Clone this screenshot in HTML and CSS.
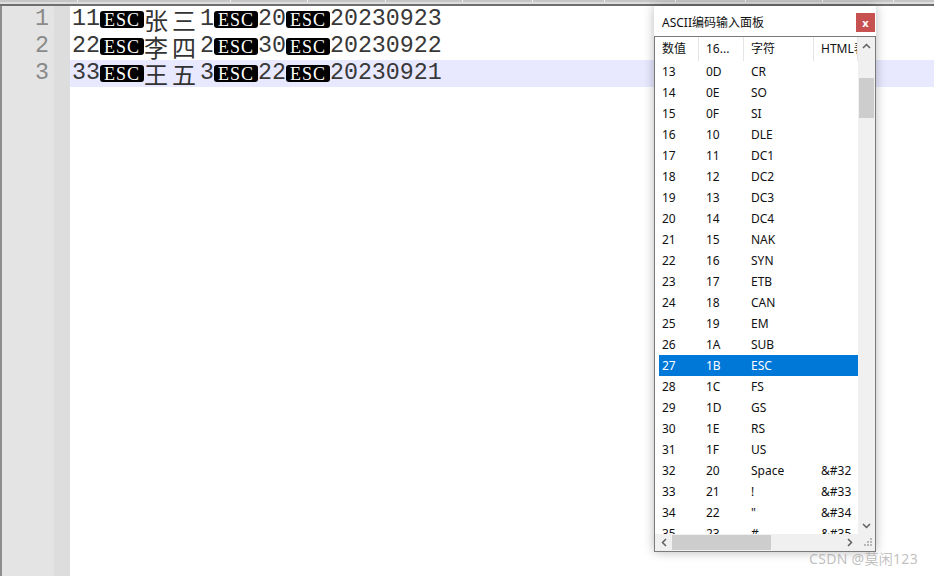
FILE: index.html
```html
<!DOCTYPE html>
<html lang="zh-CN">
  <head>
    <meta charset="UTF-8" />
    <meta name="viewport" content="width=device-width, initial-scale=1.0" />
    <title>ASCII 编码输入面板</title>
    <link rel="stylesheet" href="styles.css">
  </head>
  <body>
    <div class="tabs">
      <div class="tab" style="width: 77px"></div>
      <div class="tab" style="width: 152px"></div>
      <div class="tab" style="width: 76px"></div>
      <div class="tab" style="width: 77px"></div>
      <div class="tab" style="width: 76px"></div>
      <div class="tab" style="width: 69px"></div>
      <div class="tab" style="width: 71px"></div>
      <div class="tab" style="width: 70px"></div>
      <div class="tab" style="width: 69px"></div>
      <div class="tab" style="width: 76px"></div>
      <div class="tab" style="width: 70px"></div>
    </div>
    <div class="tab-line"></div>

    <div class="editor">
      <div class="gutter">
        <div class="num">1</div>
        <div class="num">2</div>
        <div class="num">3</div>
      </div>
      <div class="fold"></div>
      <div class="text">
        <div class="line">11<span class="esc">ESC</span><span class="cjk">张三</span>1<span class="esc">ESC</span>20<span class="esc">ESC</span>20230923</div>
        <div class="line">22<span class="esc">ESC</span><span class="cjk">李四</span>2<span class="esc">ESC</span>30<span class="esc">ESC</span>20230922</div>
        <div class="line current">33<span class="esc">ESC</span><span class="cjk">王五</span>3<span class="esc">ESC</span>22<span class="esc">ESC</span>20230921</div>
      </div>
    </div>

    <!-- floating ascii panel -->
    <div class="panel">
      <div class="title">
        <span>ASCII编码输入面板</span>
        <button class="close">x</button>
      </div>
      <div class="box">
        <div class="list-wrap">
          <div class="list">
            <div class="head">
              <div>数值</div>
              <div>16...</div>
              <div>字符</div>
              <div>HTML表示</div>
            </div>
            <div class="row"><div>13</div><div>0D</div><div>CR</div><div></div></div>
            <div class="row"><div>14</div><div>0E</div><div>SO</div><div></div></div>
            <div class="row"><div>15</div><div>0F</div><div>SI</div><div></div></div>
            <div class="row"><div>16</div><div>10</div><div>DLE</div><div></div></div>
            <div class="row"><div>17</div><div>11</div><div>DC1</div><div></div></div>
            <div class="row"><div>18</div><div>12</div><div>DC2</div><div></div></div>
            <div class="row"><div>19</div><div>13</div><div>DC3</div><div></div></div>
            <div class="row"><div>20</div><div>14</div><div>DC4</div><div></div></div>
            <div class="row"><div>21</div><div>15</div><div>NAK</div><div></div></div>
            <div class="row"><div>22</div><div>16</div><div>SYN</div><div></div></div>
            <div class="row"><div>23</div><div>17</div><div>ETB</div><div></div></div>
            <div class="row"><div>24</div><div>18</div><div>CAN</div><div></div></div>
            <div class="row"><div>25</div><div>19</div><div>EM</div><div></div></div>
            <div class="row"><div>26</div><div>1A</div><div>SUB</div><div></div></div>
            <div class="row selected"><div>27</div><div>1B</div><div>ESC</div><div></div></div>
            <div class="row"><div>28</div><div>1C</div><div>FS</div><div></div></div>
            <div class="row"><div>29</div><div>1D</div><div>GS</div><div></div></div>
            <div class="row"><div>30</div><div>1E</div><div>RS</div><div></div></div>
            <div class="row"><div>31</div><div>1F</div><div>US</div><div></div></div>
            <div class="row"><div>32</div><div>20</div><div>Space</div><div>&amp;#32</div></div>
            <div class="row"><div>33</div><div>21</div><div>!</div><div>&amp;#33</div></div>
            <div class="row"><div>34</div><div>22</div><div>"</div><div>&amp;#34</div></div>
            <div class="row"><div>35</div><div>23</div><div>#</div><div>&amp;#35</div></div>
          </div>
          <div class="vscroll">
            <div class="arrow">
              <svg width="9" height="6" viewBox="0 0 9 6"><path d="M1 5 L4.5 1.5 L8 5" fill="none" stroke="#606060" stroke-width="1.5"/></svg>
            </div>
            <div class="track"><div class="thumb"></div></div>
            <div class="arrow">
              <svg width="9" height="6" viewBox="0 0 9 6"><path d="M1 1 L4.5 4.5 L8 1" fill="none" stroke="#606060" stroke-width="1.5"/></svg>
            </div>
          </div>
        </div>
        <div class="hbar">
          <div class="hscroll">
            <div class="arrow">
              <svg width="6" height="9" viewBox="0 0 6 9"><path d="M5 1 L1.5 4.5 L5 8" fill="none" stroke="#606060" stroke-width="1.5"/></svg>
            </div>
            <div class="htrack"><div class="hthumb"></div></div>
            <div class="arrow">
              <svg width="6" height="9" viewBox="0 0 6 9"><path d="M1 1 L4.5 4.5 L1 8" fill="none" stroke="#606060" stroke-width="1.5"/></svg>
            </div>
          </div>
          <div class="corner">
            <svg width="17" height="17" viewBox="0 0 17 17" fill="#b8b8b8">
              <rect x="12" y="4" width="2" height="2"/>
              <rect x="9" y="7" width="2" height="2"/><rect x="12" y="7" width="2" height="2"/>
              <rect x="6" y="10" width="2" height="2"/><rect x="9" y="10" width="2" height="2"/><rect x="12" y="10" width="2" height="2"/>
            </svg>
          </div>
        </div>
      </div>
    </div>

    <div class="watermark">CSDN @莫闲123</div>
  </body>
</html>
```

FILE: styles.css
```css
body {
  margin: 0;
  width: 934px;
  height: 576px;
  overflow: hidden;
  background-color: #fff;
  font-family: "Segoe UI", "Noto Sans", "Noto Sans CJK SC", sans-serif;
  position: relative;
}

.tabs {
  display: flex;
  height: 2px;
  background-color: #c6c6c6;
}

.tab {
  border-right: 1px solid #eeeeee;
  flex-shrink: 0;
}

.tab-line {
  height: 2px;
  border-top: 2px solid #dedede;
  background-color: #6f6f6f;
}

.editor {
  display: flex;
  height: 570px;
}

.gutter {
  width: 47px;
  border-left: 2px solid #8e8e8e;
  background-color: #e4e4e4;
  padding-right: 5px;
  font-family: "Liberation Mono", monospace;
  font-size: 23.3px;
  color: #8a8a8a;
  text-align: right;
}

.num {
  height: 27px;
  line-height: 27px;
}

.fold {
  width: 16px;
  background-color: #dddddd;
}

.text {
  flex: 1;
  font-family: "Liberation Mono", monospace;
  font-size: 23.3px;
  color: #383838;
}

.line {
  display: flex;
  align-items: center;
  height: 27px;
  line-height: 27px;
  padding-left: 2px;
  white-space: pre;
}

.line.current {
  background-color: #e8e8ff;
}

.esc {
  display: inline-block;
  width: 44px;
  height: 17px;
  line-height: 18px;
  background-color: #000;
  color: #fff;
  border-radius: 3px;
  font-family: "Liberation Serif", serif;
  font-size: 18px;
  letter-spacing: 1px;
  text-align: center;
}

.cjk {
  display: inline-block;
  height: 27px;
  font-family: "Noto Sans CJK SC", sans-serif;
  font-size: 24px;
  line-height: 27px;
  letter-spacing: 4px;
  color: #333;
}

.panel {
  position: absolute;
  left: 654px;
  top: 6px;
  width: 222px;
  height: 546px;
  background-color: #fff;
  box-shadow: 0 0 10px rgba(0, 0, 0, 0.28);
  display: flex;
  flex-direction: column;
}

.title {
  height: 30px;
  display: flex;
  justify-content: space-between;
  align-items: flex-start;
  padding-left: 8px;
  padding-right: 1px;
  font-size: 12px;
  color: #111;
}

.title span {
  margin-top: 7px;
}

.close {
  margin-top: 7px;
  width: 19px;
  height: 19px;
  border: none;
  padding: 0;
  background-color: #c75050;
  color: #fff;
  font-family: "Noto Sans", sans-serif;
  font-size: 11px;
  font-weight: bold;
  line-height: 17px;
}

.box {
  flex: 1;
  border: 1px solid #7a7a7a;
  display: flex;
  flex-direction: column;
  overflow: hidden;
}

.list-wrap {
  flex: 1;
  display: flex;
  overflow: hidden;
}

.list {
  width: 203px;
  overflow: hidden;
  font-size: 12px;
  color: #111;
}

.head {
  display: grid;
  grid-template-columns: 44px 45px 70px 44px;
  height: 24px;
}

.head div {
  padding-left: 7px;
  line-height: 24px;
  border-right: 1px solid #e5e5e5;
  white-space: nowrap;
  overflow: hidden;
}

.row {
  display: grid;
  grid-template-columns: 40px 45px 70px 44px;
  margin-left: 4px;
  height: 21px;
  line-height: 21px;
}

.row div {
  padding-left: 7px;
  white-space: nowrap;
  overflow: hidden;
}

.row div:first-child {
  padding-left: 3px;
}

.row.selected {
  background-color: #0078d7;
  color: #fff;
}

.vscroll {
  width: 17px;
  background-color: #f0f0f0;
  display: flex;
  flex-direction: column;
}

.arrow {
  width: 17px;
  height: 17px;
  display: flex;
  align-items: center;
  justify-content: center;
  flex-shrink: 0;
}

.track {
  flex: 1;
  padding: 0 1px;
}

.thumb {
  margin-top: 24px;
  height: 40px;
  background-color: #cdcdcd;
}

.hbar {
  display: flex;
  height: 17px;
  background-color: #f0f0f0;
}

.hscroll {
  width: 203px;
  display: flex;
}

.htrack {
  flex: 1;
  padding: 1px 0;
}

.hthumb {
  width: 99px;
  height: 15px;
  background-color: #cdcdcd;
}

.corner {
  width: 17px;
  height: 17px;
}

.watermark {
  position: absolute;
  right: 16px;
  bottom: 8px;
  font-family: "Noto Sans", "Noto Sans CJK SC", sans-serif;
  font-size: 14px;
  color: rgba(150, 150, 150, 0.6);
  letter-spacing: 0.3px;
}
```
